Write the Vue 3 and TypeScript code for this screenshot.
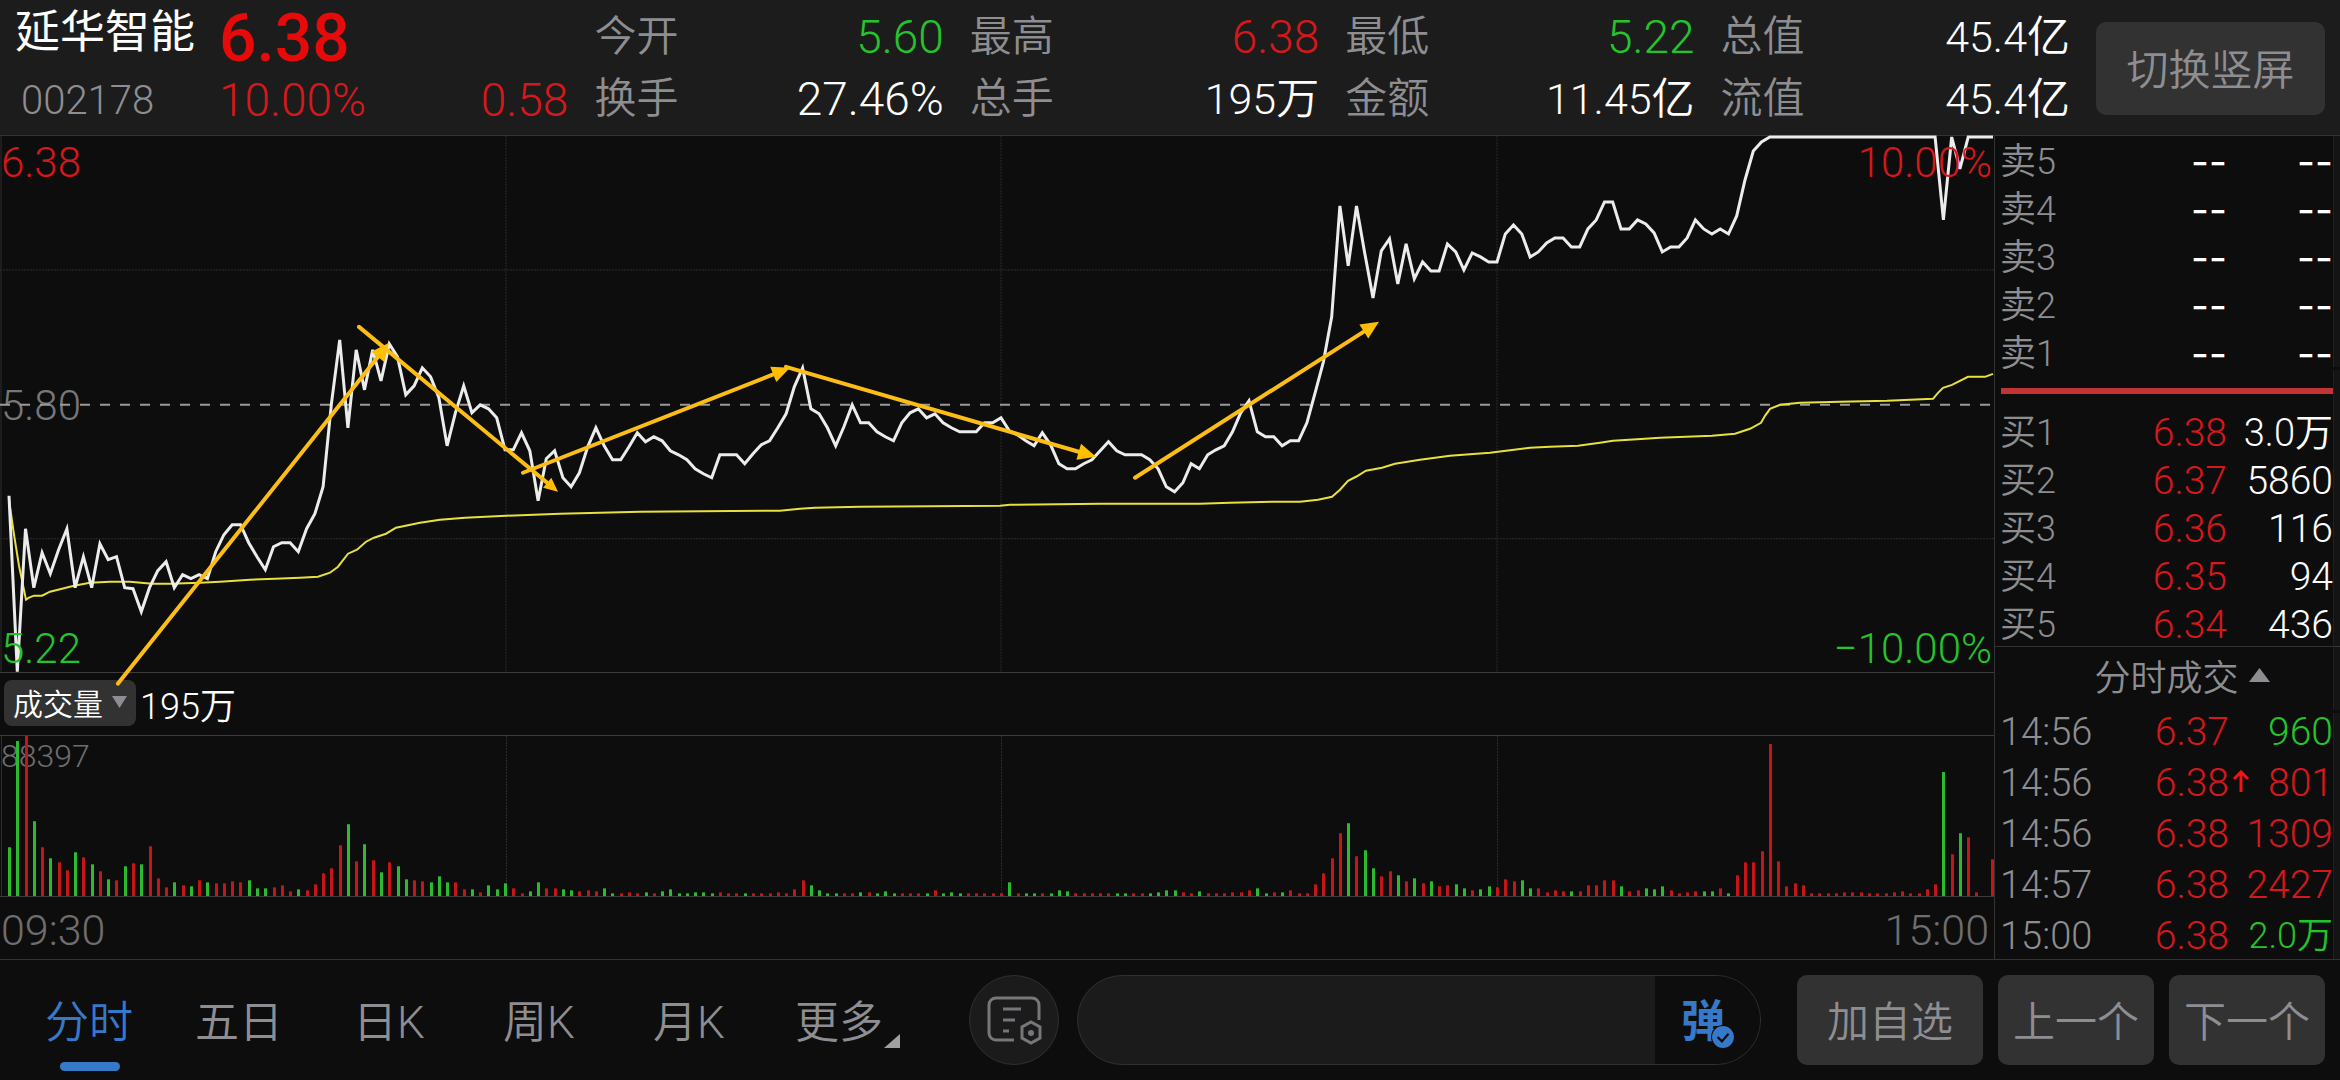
<script setup lang="ts">
import { ref } from 'vue'

type Tone = 'up' | 'down' | 'plain'

interface Stat {
  label: string
  value: string
  tone: Tone
}

interface Level {
  label: string
  price: string
  volume: string
}

interface Trade {
  time: string
  price: string
  rising: boolean
  volume: string
  tone: Tone
}

const stats: Stat[][] = [
  [
    { label: '今开', value: '5.60', tone: 'down' },
    { label: '换手', value: '27.46%', tone: 'plain' },
  ],
  [
    { label: '最高', value: '6.38', tone: 'up' },
    { label: '总手', value: '195万', tone: 'plain' },
  ],
  [
    { label: '最低', value: '5.22', tone: 'down' },
    { label: '金额', value: '11.45亿', tone: 'plain' },
  ],
  [
    { label: '总值', value: '45.4亿', tone: 'plain' },
    { label: '流值', value: '45.4亿', tone: 'plain' },
  ],
]

/* Values that end in a unit character are set one step smaller. */
const hasUnit = (value: string): boolean => /[万亿]$/.test(value)

const asks: Level[] = ['卖5', '卖4', '卖3', '卖2', '卖1'].map((label) => ({
  label,
  price: '--',
  volume: '--',
}))

const bids: Level[] = [
  { label: '买1', price: '6.38', volume: '3.0万' },
  { label: '买2', price: '6.37', volume: '5860' },
  { label: '买3', price: '6.36', volume: '116' },
  { label: '买4', price: '6.35', volume: '94' },
  { label: '买5', price: '6.34', volume: '436' },
]

const trades: Trade[] = [
  { time: '14:56', price: '6.37', rising: false, volume: '960', tone: 'down' },
  { time: '14:56', price: '6.38', rising: true, volume: '801', tone: 'up' },
  { time: '14:56', price: '6.38', rising: false, volume: '1309', tone: 'up' },
  { time: '14:57', price: '6.38', rising: false, volume: '2427', tone: 'up' },
  { time: '15:00', price: '6.38', rising: false, volume: '2.0万', tone: 'down' },
]

const tabs = ['分时', '五日', '日K', '周K', '月K', '更多']
const activeTab = ref('分时')
const comment = ref('')

/* One sample per trading minute, 09:30 to 15:00. */
const MINUTES = 240
const xAt = (i: number): number => 9 + (i * 1984) / MINUTES

const prices: number[] = [
  496, 672, 529, 588, 553, 574, 550, 529, 588, 557, 588, 544, 560, 557, 588, 589, 612, 588, 571, 562,
  588, 575, 579, 575, 579, 552, 535, 525, 525, 543, 557, 570, 547, 543, 543, 552, 529, 514, 487, 404,
  340, 428, 350, 390, 350, 381, 344, 357, 395, 386, 368, 377, 398, 446, 413, 386, 413, 405, 409, 418,
  450, 450, 433, 451, 501, 459, 451, 478, 487, 473, 447, 428, 446, 460, 460, 447, 433, 442, 437, 441,
  451, 455, 460, 469, 474, 478, 455, 455, 455, 464, 454, 445, 441, 428, 414, 387, 368, 409, 414, 428,
  446, 427, 405, 423, 423, 432, 437, 441, 423, 413, 409, 418, 414, 423, 428, 432, 432, 432, 423, 423,
  418, 431, 435, 441, 446, 433, 445, 464, 469, 469, 464, 460, 451, 442, 451, 455, 455, 455, 460, 469,
  487, 492, 483, 464, 469, 455, 450, 446, 432, 413, 401, 432, 437, 437, 446, 441, 441, 423, 393, 362,
  317, 206, 266, 206, 253, 298, 251, 239, 284, 244, 279, 262, 271, 271, 244, 252, 270, 253, 257, 262,
  262, 234, 225, 234, 257, 252, 243, 238, 238, 247, 247, 229, 220, 202, 202, 229, 229, 220, 224, 233,
  252, 247, 247, 238, 220, 229, 234, 229, 234, 216, 180, 151, 142, 137, 137, 137, 137, 137, 137, 137,
  137, 137, 137, 137, 137, 137, 137, 137, 137, 137, 137, 137, 137, 137, 220, 137, 169, 137, 137, 137,
  137,
]

const average: [number, number][] = [
  [9, 500], [14, 535], [19, 566], [26, 600], [29, 598], [34, 596], [42, 596], [50, 592], [74, 586],
  [90, 583], [110, 582], [130, 582], [152, 584], [170, 584], [200, 583], [220, 582], [250, 580],
  [275, 579], [300, 578], [318, 577], [330, 573], [338, 567], [348, 554], [357, 550], [366, 542],
  [374, 538], [386, 534], [396, 528], [420, 523], [440, 520], [465, 518], [506, 516], [560, 514],
  [600, 513], [640, 512], [780, 511], [800, 509], [815, 508], [860, 507], [1000, 506], [1010, 505],
  [1100, 504], [1200, 504], [1230, 503], [1275, 502], [1300, 502], [1318, 500], [1332, 497],
  [1340, 490], [1348, 481], [1356, 477], [1366, 471], [1382, 468], [1395, 464], [1420, 460],
  [1450, 456], [1490, 453], [1530, 448], [1550, 447], [1578, 446], [1600, 443], [1613, 441],
  [1645, 439], [1660, 438], [1712, 436], [1735, 434], [1750, 429], [1761, 423], [1765, 416],
  [1770, 409], [1780, 405], [1800, 403], [1840, 402], [1887, 401], [1933, 399], [1938, 393],
  [1943, 388], [1952, 385], [1968, 377], [1985, 377], [1993, 374],
]

const pricePoints = prices.map((y, i) => `${xAt(i).toFixed(1)},${y}`).join(' ')
const averagePoints = average.map((p) => p.join(',')).join(' ')

/* Volume bars: positive closes up (red), negative closes down (green). */
const volumes: number[] = [
  -49, -155, 160, -75, 49, -38, 34, 26, -44, 39, -32, 25, -17, 16, -30, 33, -32, 50, 18, 9,
  -14, 11, -10, 16, -14, 13, 13, 15, 14, -16, -8, -8, 9, 11, 5, -7, 6, 12, 23, 28,
  51, -72, 35, -52, 36, -24, 34, -30, -17, 16, 15, -14, -20, -14, 14, 7, -7, 4, -11, -7,
  -13, 8, 3, -5, -14, 8, 8, -7, -6, 5, 6, 5, -8, -3, 3, 4, 3, -4, 3, -5,
  -7, -3, -3, -4, -4, -3, 4, 3, 3, -3, 3, 3, 3, 4, 3, 7, 16, -11, -6, -3,
  -3, 3, 3, -4, 4, -3, -5, -3, 3, 3, 3, -3, 6, -3, -4, -3, 3, 3, 3, 3,
  3, -14, 3, -3, -3, 3, -3, -6, -5, 3, 3, 3, 3, 3, -3, -3, 3, 3, -3, -4,
  -6, -6, 4, 3, -5, 3, 3, 3, 4, 4, 6, -8, -3, 4, -4, 6, 3, 3, 12, 23,
  38, 63, -73, 40, -46, -28, 20, 25, -21, 15, -18, 13, -15, 10, 11, -12, -8, 6, -7, -10,
  9, 17, 15, -16, -8, 8, 4, 6, 5, -5, 5, 11, 11, 16, 16, -10, 5, 6, -8, -7,
  -10, 6, 3, 4, 5, -5, -5, 8, -3, 21, 34, 34, 45, 152, 35, 10, 13, 11, 3, 3,
  3, 3, 4, 4, 4, 3, 3, 3, 4, 5, 3, 3, 7, 12, -124, 42, -63, 59, 4, 0,
  37,
]

const bars = volumes.map((v, i) => ({
  x: Math.min(Math.round(xAt(i)) - 1, 1991),
  height: Math.abs(v),
  up: v > 0,
}))

interface Arrow {
  from: [number, number]
  to: [number, number]
  head: number
}

const arrows: Arrow[] = [
  { from: [118, 684], to: [389, 343], head: 18 },
  { from: [359, 327], to: [558, 492], head: 14 },
  { from: [523, 473], to: [790, 368], head: 18 },
  { from: [786, 367], to: [1096, 457], head: 18 },
  { from: [1135, 478], to: [1379, 322], head: 18 },
]

const drawn = arrows.map(({ from, to, head }) => {
  const dx = to[0] - from[0]
  const dy = to[1] - from[1]
  const len = Math.hypot(dx, dy)
  const ux = dx / len
  const uy = dy / len
  const bx = to[0] - ux * head
  const by = to[1] - uy * head
  const half = head * 0.46
  return {
    x1: from[0],
    y1: from[1],
    x2: bx,
    y2: by,
    tip: `${to[0]},${to[1]} ${bx - uy * half},${by + ux * half} ${bx + uy * half},${by - ux * half}`,
  }
})

const gridX = [506, 1001, 1497]
</script>

<template>
  <div class="app">
    <header class="header">
      <div class="stock">
        <h1 class="name">延华智能</h1>
        <span class="code">002178</span>
      </div>
      <div class="quote">
        <strong class="last">6.38</strong>
        <div class="change"><span>10.00%</span><span>0.58</span></div>
      </div>
      <dl v-for="(column, c) in stats" :key="c" class="stats">
        <div v-for="s in column" :key="s.label" class="stat">
          <dt>{{ s.label }}</dt>
          <dd :class="[s.tone, { unit: hasUnit(s.value) }]">{{ s.value }}</dd>
        </div>
      </dl>
      <button type="button" class="block rotate">切换竖屏</button>
    </header>

    <main class="main">
      <section class="charts">
        <div class="price-chart">
          <svg class="plot overlay" viewBox="0 136 1994 536" preserveAspectRatio="none" aria-hidden="true">
            <g class="grid">
              <line x1="1" x2="1" y1="136" y2="672" />
              <line v-for="x in gridX" :key="x" class="dotted" :x1="x" :x2="x" y1="136" y2="672" />
              <line class="dotted" x1="0" x2="1994" y1="270" y2="270" />
              <line class="dotted" x1="0" x2="1994" y1="539" y2="539" />
            </g>
            <line class="base" x1="0" x2="1994" y1="405" y2="405" />
            <polyline class="avg" :points="averagePoints" />
            <polyline class="price" :points="pricePoints" />
            <g v-for="(a, i) in drawn" :key="i" class="arrow">
              <line :x1="a.x1" :y1="a.y1" :x2="a.x2" :y2="a.y2" />
              <polygon :points="a.tip" />
            </g>
          </svg>
          <div class="scale up"><span>6.38</span><span>10.00%</span></div>
          <div class="scale mid"><span>5.80</span></div>
          <div class="scale down"><span>5.22</span><span>−10.00%</span></div>
        </div>

        <div class="indicator">
          <button type="button" class="block picker">
            成交量
            <svg width="15" height="12" viewBox="0 0 15 12" aria-hidden="true"><path d="M0 0h15L7.500 12z" fill="#8e8e92" /></svg>
          </button>
          <span>195万</span>
        </div>

        <div class="volume-chart">
          <span class="peak">88397</span>
          <svg class="plot" viewBox="0 0 1994 160" preserveAspectRatio="none" aria-hidden="true">
            <g class="grid">
              <line x1="1" x2="1" y1="0" y2="160" />
              <line v-for="x in gridX" :key="x" class="dotted" :x1="x" :x2="x" y1="0" y2="160" />
            </g>
            <rect
              v-for="(b, i) in bars"
              :key="i"
              :x="b.x"
              :y="160 - b.height"
              width="3"
              :height="b.height"
              :class="b.up ? 'bar-up' : 'bar-down'"
            />
          </svg>
        </div>

        <div class="axis"><span>09:30</span><span>15:00</span></div>
      </section>

      <aside class="book">
        <table class="levels asks">
          <tbody>
            <tr v-for="l in asks" :key="l.label">
              <th scope="row">{{ l.label }}</th>
              <td class="cost">{{ l.price }}</td>
              <td>{{ l.volume }}</td>
            </tr>
          </tbody>
        </table>
        <div class="ratio"></div>
        <table class="levels">
          <tbody>
            <tr v-for="l in bids" :key="l.label">
              <th scope="row">{{ l.label }}</th>
              <td class="cost up">{{ l.price }}</td>
              <td :class="{ unit: hasUnit(l.volume) }">{{ l.volume }}</td>
            </tr>
          </tbody>
        </table>
        <button type="button" class="toggle">
          分时成交
          <svg width="21" height="14" viewBox="0 0 21 14" aria-hidden="true"><path d="M10.500 0 21 14H0z" fill="#8e8e92" /></svg>
        </button>
        <table class="levels trades">
          <tbody>
            <tr v-for="(t, i) in trades" :key="i">
              <th scope="row">{{ t.time }}</th>
              <td class="cost up">
                {{ t.price }}
                <svg v-if="t.rising" class="rise" width="18" height="22" viewBox="0 0 18 22" aria-hidden="true">
                  <path d="M9 22V3M2 9l7-7 7 7" fill="none" stroke="#f01414" stroke-width="3" />
                </svg>
              </td>
              <td :class="[t.tone, { unit: hasUnit(t.volume) }]">{{ t.volume }}</td>
            </tr>
          </tbody>
        </table>
        <div class="edge" aria-hidden="true"><i></i><i></i><i></i></div>
      </aside>
    </main>

    <footer class="footer">
      <nav class="tabs">
        <button
          v-for="t in tabs"
          :key="t"
          type="button"
          class="tab"
          :class="{ active: t === activeTab }"
          @click="activeTab = t"
        >
          {{ t }}
          <svg v-if="t === '更多'" class="corner" width="16" height="14" viewBox="0 0 16 14" aria-hidden="true"><path d="M16 0v14H0z" fill="#a0a0a2" /></svg>
        </button>
      </nav>
      <button type="button" class="round" aria-label="评论设置">
        <svg width="56" height="50" viewBox="0 0 56 50" fill="none" stroke="#77777b" stroke-width="3" aria-hidden="true">
          <path d="M28 45H10a7 7 0 0 1-7-7V10a7 7 0 0 1 7-7h36a7 7 0 0 1 7 7v15" />
          <path d="M17 14h18M17 25h12M17 36h6" />
          <path d="m45 27 9 5v11l-9 5-9-5V32z" />
          <circle cx="45" cy="38" r="3" fill="#77777b" stroke="none" />
        </svg>
      </button>
      <div class="compose">
        <input v-model="comment" type="text" aria-label="发表评论" />
        <button type="button" class="danmu" aria-label="弹幕">
          <span>弹</span>
          <svg class="check" width="24" height="24" viewBox="0 0 22 22" aria-hidden="true">
            <circle cx="11" cy="11" r="11" fill="#0d0d0d" />
            <circle cx="11" cy="11" r="10" fill="#3579c8" />
            <path d="m6 11 4 4 6-7" fill="none" stroke="#0d0d0d" stroke-width="2" />
          </svg>
        </button>
      </div>
      <div class="actions">
        <button type="button" class="block wide">加自选</button>
        <button type="button" class="block">上一个</button>
        <button type="button" class="block">下一个</button>
      </div>
    </footer>
  </div>
</template>

<style>
body {
  background: #0d0d0d;
}
</style>

<style scoped>
.app {
  display: flex;
  flex-direction: column;
  min-height: 100vh;
  overflow: hidden;
  background: #0d0d0d;
  color: #fff;
  font-family: Roboto, 'Noto Sans CJK SC', sans-serif;
  font-size: 39px;
  font-weight: 350;
  white-space: nowrap;
}

.app *,
.app *::after {
  box-sizing: border-box;
}

button,
input {
  margin: 0;
  padding: 0;
  border: 0;
  background: none;
  color: #8e8e92;
  font: inherit;
}

.up {
  color: #d4181b;
}

.down {
  color: #25c32c;
}

.plain {
  color: #fff;
}

.block {
  padding-bottom: 4px;
  border-radius: 10px;
  background: #323232;
  font-size: 42px;
}

/* header */
.header {
  display: grid;
  grid-template-columns: 178px repeat(5, 1fr) 229px;
  column-gap: 26px;
  align-items: center;
  padding: 5px 15px 4px;
  border-bottom: 1px solid #333;
  background: #1c1c1c;
}

.stock {
  display: grid;
  row-gap: 10px;
}

.name {
  margin: 0;
  font-size: 45px;
  font-weight: 400;
  line-height: 56px;
}

.code {
  padding-left: 6px;
  color: #8e8e92;
  font-size: 40px;
  line-height: 60px;
}

.quote {
  display: grid;
  grid-template-rows: 64px 60px;
}

.last {
  color: #e60a0a;
  font-size: 66px;
  font-weight: 500;
  line-height: 66px;
}

.change {
  display: flex;
  justify-content: space-between;
  color: #d4181b;
  font-size: 46px;
  line-height: 60px;
}

.stats {
  margin: 0;
  font-size: 46px;
}

.stat {
  display: flex;
  justify-content: space-between;
  line-height: 62px;
}

.stat dt {
  color: #8e8e92;
  font-size: 42px;
}

.stat dd {
  margin: 0;
}

.stat .unit {
  font-size: 43px;
}

.rotate {
  height: 93px;
}

/* charts */
.main {
  display: grid;
  flex: 1;
  grid-template-columns: 1fr 345px;
}

.charts {
  display: flex;
  flex-direction: column;
  min-width: 0;
  border-right: 1px solid #333;
}

.price-chart {
  position: relative;
  display: flex;
  flex: 537 1 0;
  flex-direction: column;
  justify-content: space-between;
  min-height: 240px;
  padding-top: 4px;
  border-bottom: 1px solid #3c3c3c;
}

.plot {
  position: absolute;
  inset: 0;
  display: block;
  width: 100%;
  height: 100%;
}

.overlay {
  z-index: 1;
  overflow: visible;
  pointer-events: none;
}

.grid line {
  stroke: #2e2e2e;
  stroke-width: 1;
  shape-rendering: crispEdges;
}

.grid .dotted {
  stroke: #2c2c2c;
  stroke-dasharray: 2 1;
}

.base {
  stroke: #9a9a9a;
  stroke-width: 2;
  stroke-dasharray: 10 10;
}

.avg {
  fill: none;
  stroke: #e8e03c;
  stroke-width: 2;
}

.price {
  fill: none;
  stroke: #ececec;
  stroke-width: 3;
}

.arrow line {
  stroke: #fcbd14;
  stroke-width: 4;
  stroke-linecap: round;
}

.arrow polygon {
  fill: #ffbf00;
}

.scale {
  z-index: 2;
  display: flex;
  justify-content: space-between;
  padding: 0 2px 0 1px;
  font-size: 42px;
  line-height: 46px;
}

.mid {
  z-index: 0;
  color: #77777a;
}

.indicator {
  display: flex;
  align-items: center;
  gap: 4px;
  min-height: 62px;
  padding-bottom: 2px;
  padding-left: 4px;
  font-size: 36px;
}

.picker {
  display: flex;
  align-items: center;
  justify-content: space-between;
  width: 132px;
  height: 46px;
  padding: 0 9px 2px;
  border-radius: 8px;
  color: #fff;
  font-size: 30px;
}

.volume-chart {
  position: relative;
  flex: 162 1 0;
  min-height: 80px;
  border-top: 1px solid #3c3c3c;
  border-bottom: 1px solid #3c3c3c;
}

.peak {
  display: block;
  padding-left: 1px;
  color: #6e6e70;
  font-size: 32px;
  line-height: 41px;
}

.bar-up {
  fill: #c41619;
}

.bar-down {
  fill: #2abb2e;
}

.axis {
  display: flex;
  align-items: center;
  justify-content: space-between;
  min-height: 62px;
  padding: 4px 5px 0 1px;
  color: #6e6e70;
  font-size: 43px;
}

/* order book */
.book {
  position: relative;
}

.levels {
  width: 333px;
  margin: 0 7px 0 5px;
  border-collapse: collapse;
  table-layout: fixed;
}

.levels th,
.levels td {
  height: 48px;
  padding: 0;
  font-weight: inherit;
  line-height: 48px;
  text-align: right;
}

.levels th {
  width: 113px;
  color: #8e8e92;
  font-size: 36px;
  text-align: left;
}

.levels .cost {
  width: 114px;
}

.levels .unit {
  font-size: 38px;
}

.asks {
  margin-top: 2px;
}

.asks td {
  font-family: Inter, 'Noto Sans CJK SC', sans-serif;
  font-weight: 400;
}

.ratio {
  height: 6px;
  margin: 10px 6px 15px;
  background: #c23333;
}

.toggle {
  display: flex;
  align-items: center;
  justify-content: center;
  gap: 10px;
  width: 100%;
  height: 61px;
  margin-top: -3px;
  padding: 0 0 4px 29px;
  border-top: 1px solid #333;
  font-size: 36px;
}

.trades {
  margin-bottom: -3px;
}

.trades th,
.trades td {
  position: relative;
  height: 51px;
  line-height: 51px;
}

.levels.trades th {
  font-size: 38px;
}

.levels.trades .unit {
  font-size: 36px;
}

.levels.trades .cost {
  width: 116px;
}

.rise {
  position: absolute;
  top: 12px;
  left: 100%;
  margin-left: 3px;
}

.edge {
  position: absolute;
  top: 0;
  right: 0;
  bottom: 0;
  display: grid;
  grid-template-rows: 232fr 340fr 247fr;
  row-gap: 3px;
  width: 7px;
}

.edge i {
  border-left: 1px solid #202022;
  background: rgba(255, 255, 255, 0.03);
}

/* footer */
.footer {
  display: flex;
  align-items: center;
  padding: 15px;
  border-top: 1px solid #333;
  background: #0d0d0d;
}

.tabs {
  display: grid;
  grid-template-columns: repeat(6, 150px);
}

.tab {
  position: relative;
  height: 90px;
  padding: 0 2px 2px 0;
  font-size: 44px;
}

.tab.active {
  color: #3579c8;
}

.tab.active::after {
  position: absolute;
  bottom: -6px;
  left: 50%;
  width: 60px;
  height: 9px;
  border-radius: 5px;
  background: #3579c8;
  content: '';
  transform: translateX(-50%);
}

.corner {
  position: absolute;
  right: 15px;
  bottom: 17px;
}

.round {
  display: flex;
  align-items: center;
  justify-content: center;
  width: 90px;
  height: 90px;
  margin: 0 18px 0 54px;
  border: 1px solid #303030;
  border-radius: 50%;
  background: #1b1b1b;
}

.compose {
  display: flex;
  flex: 1;
  height: 90px;
  margin-right: 36px;
  overflow: hidden;
  border: 1px solid #303030;
  border-radius: 45px;
  background: #1b1b1b;
}

.compose input {
  flex: 1;
  min-width: 0;
  padding: 0 36px;
  outline: 0;
}

.danmu {
  display: flex;
  align-items: center;
  justify-content: center;
  position: relative;
  width: 105px;
  padding: 0 9px 4px 0;
  background: #0d0d0d;
  color: #3579c8;
  font-size: 44px;
  font-weight: 700;
}

.check {
  position: absolute;
  right: 25px;
  bottom: 15px;
}

.actions {
  display: flex;
  gap: 15px;
}

.actions .block {
  width: 156px;
  height: 90px;
}

.actions .wide {
  width: 186px;
}
</style>
